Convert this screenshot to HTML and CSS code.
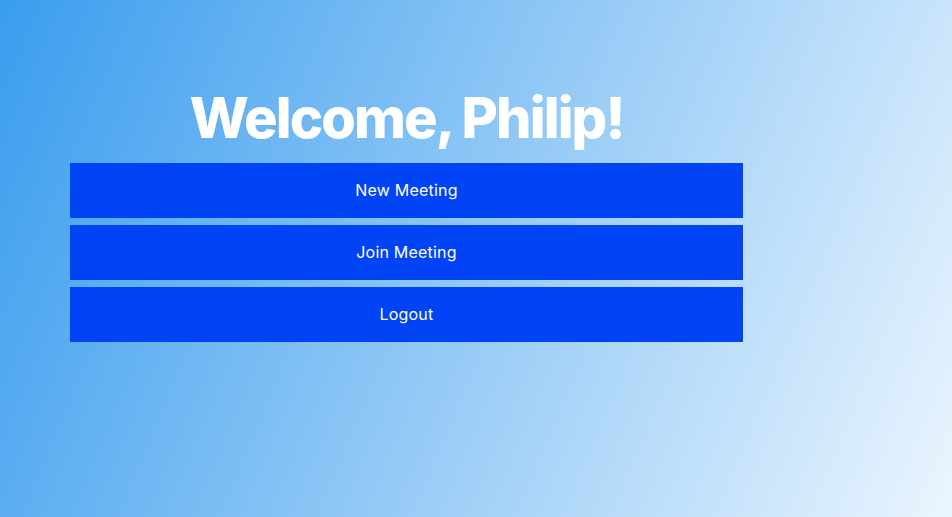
FILE: index.html
```html
<!DOCTYPE html>
<html lang="en">
<head>
<meta charset="utf-8">
<title>Welcome</title>
<link rel="stylesheet" href="styles.css">
</head>
<body>
<main class="page">
  <section class="panel">
    <h1 class="title">Welcome, Philip!</h1>
    <div class="actions">
      <button class="btn" type="button">New Meeting</button>
      <button class="btn" type="button">Join Meeting</button>
      <button class="btn" type="button">Logout</button>
    </div>
  </section>
</main>
</body>
</html>
```
FILE: styles.css
```css
html, body {
  margin: 0;
  padding: 0;
  height: 100%;
}
body {
  font-family: "Inter", "Noto Sans", sans-serif;
  background: linear-gradient(113deg, #3a9dee 0%, #ebf5fe 100%);
  overflow: hidden;
}
.page {
  height: 517px;
  padding: 85px 0 0 70px;
  box-sizing: border-box;
}
.panel {
  width: 673px;
  display: flex;
  flex-direction: column;
}
.title {
  margin: 0 0 11px;
  font-size: 56px;
  line-height: 67px;
  font-weight: 800;
  color: #ffffff;
  text-align: center;
  letter-spacing: -1.9px;
}
.actions {
  display: flex;
  flex-direction: column;
  gap: 7px;
}
.btn {
  height: 55px;
  border: 0;
  margin: 0;
  padding: 0 0 1px;
  background: #0044f6;
  color: #ffffff;
  font-family: "Inter", "Noto Sans", sans-serif;
  font-size: 16px;
  font-weight: 400;
  letter-spacing: 0.2px;
  text-align: center;
}
```
